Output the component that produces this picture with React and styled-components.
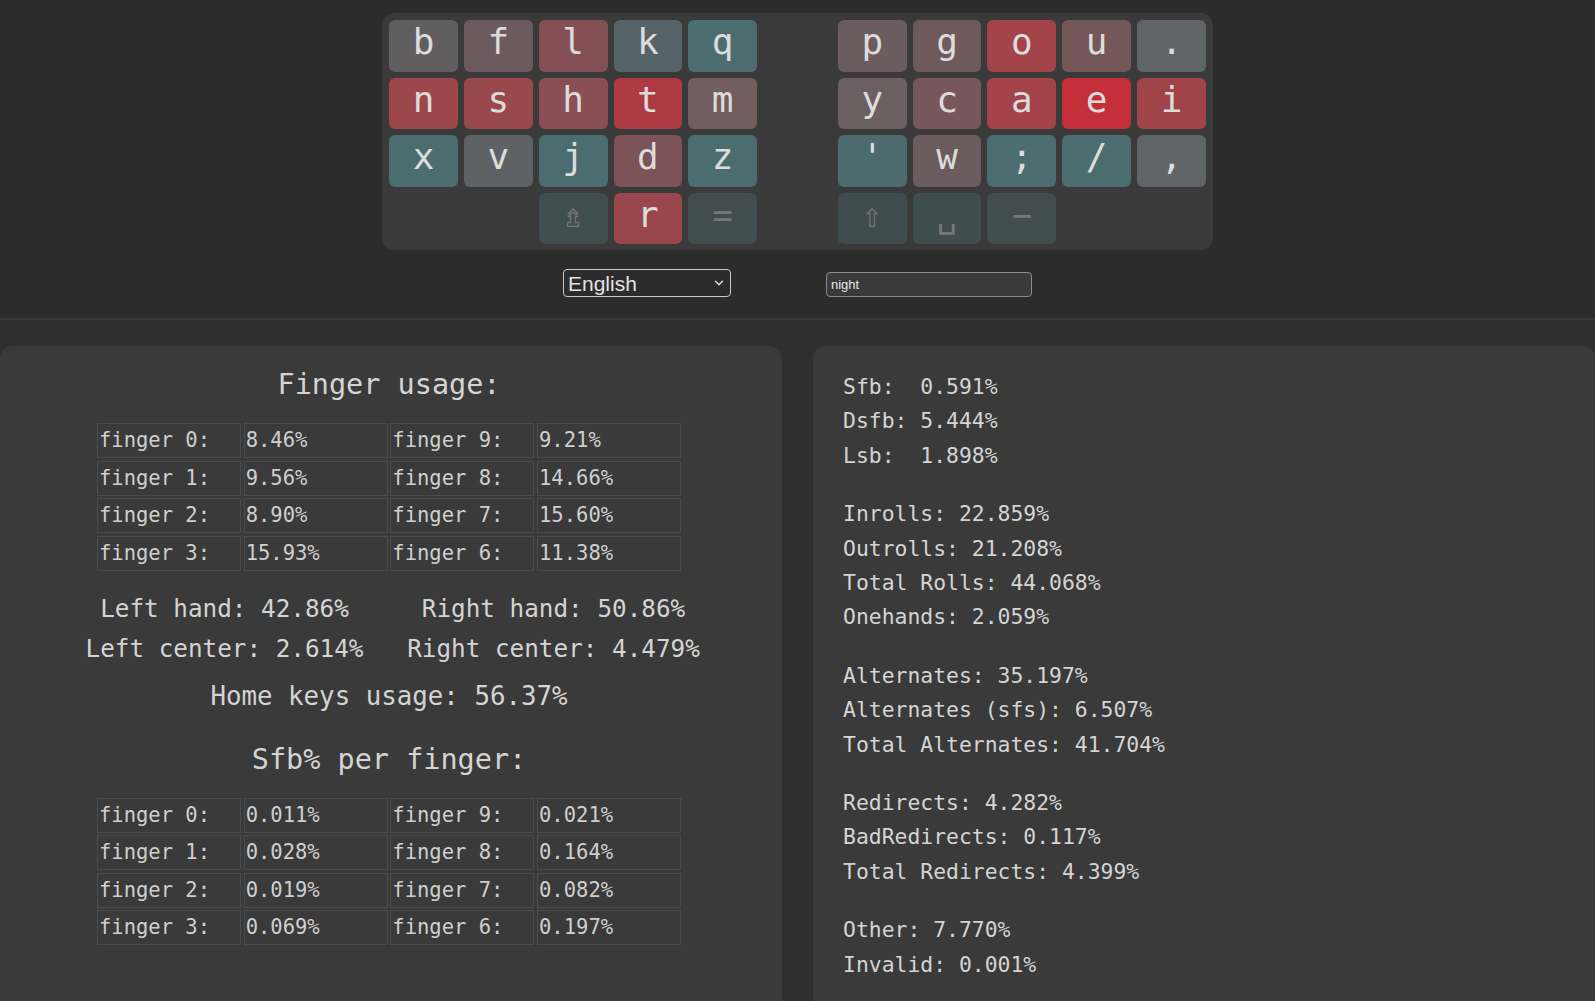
import React from "react";
import styled, { createGlobalStyle } from "styled-components";
import { ChevronDown } from "lucide-react";

const GlobalStyle = createGlobalStyle`
  body {
    margin: 0;
    background: #2f2f2f;
    color: #d6d6d6;
    font-family: "DejaVu Sans Mono", "Liberation Mono", monospace;
  }
`;

const Header = styled.header`
  background: #2c2c2c;
  border-bottom: 2px solid #3a3a3a;
  padding: 13px 0 21px 0;
  display: flex;
  flex-direction: column;
  align-items: center;
`;

const Board = styled.div`
  background: #3a3a3a;
  border-radius: 12px;
  padding: 7px 7px 6px 7px;
  display: grid;
  grid-template-columns: repeat(11, 68.8px);
  grid-auto-rows: 51.5px;
  column-gap: 6px;
  row-gap: 6px;
`;

const Key = styled.div`
  background: ${(p) => p.$bg};
  border-radius: 6px;
  display: flex;
  justify-content: center;
  align-items: center;
  color: ${(p) => (p.$dim ? "#777" : "#dcdcdc")};
  font-size: ${(p) => (p.$dim ? "34px" : "36px")};
  line-height: 1;
  padding-bottom: 7px;
  box-sizing: border-box;
`;

const Blank = styled.div``;

const Controls = styled.div`
  margin-top: 19px;
  display: flex;
  align-items: flex-end;
  gap: 95px;
`;

const SelectWrap = styled.div`
  position: relative;
  width: 168px;
  height: 28px;
`;

const LangSelect = styled.select`
  appearance: none;
  width: 100%;
  height: 100%;
  background: transparent;
  color: #e2e2e2;
  border: 1px solid #c8c8c8;
  border-radius: 4px;
  font-family: "Liberation Sans", Arial, sans-serif;
  font-size: 21px;
  padding: 0 0 0 4px;
  box-sizing: border-box;
`;

const Chevron = styled.span`
  position: absolute;
  right: 5px;
  top: 7px;
  color: #dcdcdc;
  pointer-events: none;
  display: flex;
`;

const SearchInput = styled.input`
  width: 206px;
  height: 25px;
  box-sizing: border-box;
  background: #3a3a3a;
  border: 1px solid #8c8c8c;
  border-radius: 4px;
  color: #e6e6e6;
  font-family: "Liberation Sans", Arial, sans-serif;
  font-size: 13px;
  padding: 0 4px;
`;

const Main = styled.main`
  padding-top: 26px;
  display: flex;
  gap: 31px;
`;

const Panel = styled.section`
  background: #3a3a3a;
  border-radius: 12px 12px 0 0;
  min-height: 700px;
  box-sizing: border-box;
`;

const LeftPanel = styled(Panel)`
  width: 782px;
  flex: none;
  padding: 22px 4px 0 0;
  display: flex;
  flex-direction: column;
  align-items: center;
`;

const RightPanel = styled(Panel)`
  flex: 1;
  padding: 24px 0 0 30px;
`;

const Heading = styled.h2`
  margin: ${(p) => p.$top || "0"} 0 21px 0;
  font-size: 28.5px;
  font-weight: 400;
  line-height: 34px;
  color: #d4d4d4;
`;

const Table = styled.div`
  display: grid;
  grid-template-columns: repeat(4, 144px);
  grid-auto-rows: 35px;
  column-gap: 2.7px;
  row-gap: 2.5px;
`;

const Cell = styled.div`
  border: 1px solid #4b4b4b;
  padding-left: 1px;
  font-size: 20.5px;
  line-height: 33px;
  color: #cfcfcf;
  white-space: pre;
`;

const HandGrid = styled.div`
  margin-top: 18px;
  display: grid;
  grid-template-columns: 329px 329px;
  grid-auto-rows: 40.5px;
  font-size: 24.3px;
  line-height: 40.5px;
  text-align: center;
  color: #d4d4d4;
  white-space: pre;
`;

const HomeKeys = styled.div`
  margin-top: 4px;
  font-size: 25.8px;
  line-height: 44px;
  color: #d4d4d4;
`;

const Group = styled.div`
  margin-bottom: 24px;
`;

const Stat = styled.div`
  font-size: 21.4px;
  line-height: 34.4px;
  color: #d4d4d4;
  white-space: pre;
`;

const board = [
  [
    ["b", "#605e5e"], ["f", "#6b5b5e"], ["l", "#855055"], ["k", "#56646a"], ["q", "#4b6d70"],
    null,
    ["p", "#6b5d5f"], ["g", "#6e5a5d"], ["o", "#a3434a"], ["u", "#745759"], [".", "#5f6467"],
  ],
  [
    ["n", "#9d464b"], ["s", "#99484c"], ["h", "#8a4f55"], ["t", "#ae3b44"], ["m", "#725d5f"],
    null,
    ["y", "#6a5f61"], ["c", "#77575a"], ["a", "#a4434a"], ["e", "#c42f3a"], ["i", "#a0444a"],
  ],
  [
    ["x", "#4b6d70"], ["v", "#5e6265"], ["j", "#4b6d70"], ["d", "#7c5356"], ["z", "#4b6d70"],
    null,
    ["'", "#4c6b6e"], ["w", "#6b5d5f"], [";", "#4b6d70"], ["/", "#4b6d70"], [",", "#5f6467"],
  ],
  [
    null, null, ["⇯", "#404e4f", true], ["r", "#99474d"], ["=", "#414d4e", true],
    null,
    ["⇧", "#3f4d4e", true], ["␣", "#3f4d4e", true], ["−", "#424d4e", true], null, null,
  ],
];

const fingerUsage = [
  ["finger 0:", "8.46%", "finger 9:", "9.21%"],
  ["finger 1:", "9.56%", "finger 8:", "14.66%"],
  ["finger 2:", "8.90%", "finger 7:", "15.60%"],
  ["finger 3:", "15.93%", "finger 6:", "11.38%"],
];

const sfbPerFinger = [
  ["finger 0:", "0.011%", "finger 9:", "0.021%"],
  ["finger 1:", "0.028%", "finger 8:", "0.164%"],
  ["finger 2:", "0.019%", "finger 7:", "0.082%"],
  ["finger 3:", "0.069%", "finger 6:", "0.197%"],
];

const stats = [
  ["Sfb:  0.591%", "Dsfb: 5.444%", "Lsb:  1.898%"],
  ["Inrolls: 22.859%", "Outrolls: 21.208%", "Total Rolls: 44.068%", "Onehands: 2.059%"],
  ["Alternates: 35.197%", "Alternates (sfs): 6.507%", "Total Alternates: 41.704%"],
  ["Redirects: 4.282%", "BadRedirects: 0.117%", "Total Redirects: 4.399%"],
  ["Other: 7.770%", "Invalid: 0.001%"],
];

const FingerTable = ({ rows }) => (
  <Table>
    {rows.flat().map((txt, i) => (
      <Cell key={i}>{txt}</Cell>
    ))}
  </Table>
);

export default function App() {
  return (
    <>
      <GlobalStyle />
      <Header>
        <Board>
          {board.flat().map((k, i) =>
            k ? (
              <Key key={i} $bg={k[1]} $dim={k[2]}>
                {k[0]}
              </Key>
            ) : (
              <Blank key={i} />
            )
          )}
        </Board>
        <Controls>
          <SelectWrap>
            <LangSelect defaultValue="english">
              <option value="english">English</option>
            </LangSelect>
            <Chevron>
              <ChevronDown size={14} strokeWidth={2.5} />
            </Chevron>
          </SelectWrap>
          <SearchInput defaultValue="night" />
        </Controls>
      </Header>

      <Main>
        <LeftPanel>
          <Heading>Finger usage:</Heading>
          <FingerTable rows={fingerUsage} />
          <HandGrid>
            <span>Left hand: 42.86%</span>
            <span>Right hand: 50.86%</span>
            <span>Left center: 2.614%</span>
            <span>Right center: 4.479%</span>
          </HandGrid>
          <HomeKeys>Home keys usage: 56.37%</HomeKeys>
          <Heading $top="25px">Sfb% per finger:</Heading>
          <FingerTable rows={sfbPerFinger} />
        </LeftPanel>

        <RightPanel>
          {stats.map((group, i) => (
            <Group key={i}>
              {group.map((s) => (
                <Stat key={s}>{s}</Stat>
              ))}
            </Group>
          ))}
        </RightPanel>
      </Main>
    </>
  );
}
